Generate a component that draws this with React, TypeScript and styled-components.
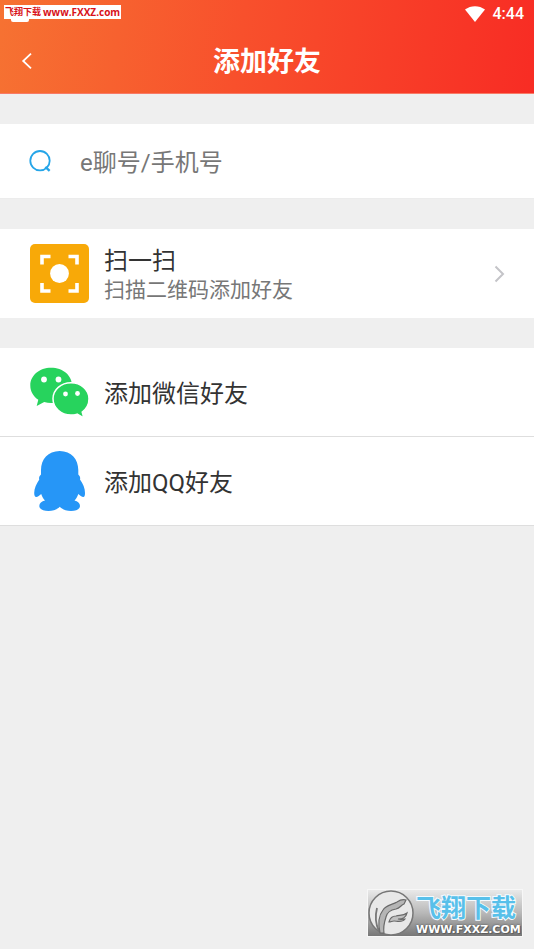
import React from 'react';
import styled, { createGlobalStyle } from 'styled-components';

const GlobalStyle = createGlobalStyle`
  *, *::before, *::after { box-sizing: border-box; }
  body {
    margin: 0;
    background: #efefef;
    font-family: Roboto, 'Noto Sans CJK SC', sans-serif;
    color: #333;
  }
  button, input { font: inherit; color: inherit; }
  svg { flex: none; }
`;

const Page = styled.div`
  position: relative;
  min-height: 100vh;
  display: flex;
  flex-direction: column;
  background: #efefef;
`;

const Header = styled.header`
  background: linear-gradient(98deg, #f67232 0%, #f8502c 45%, #f82c24 100%);
  color: #fff;
  border-bottom: 1px solid #f87a66;
`;

const StatusBar = styled.div`
  height: 28px;
  padding: 0 10px;
  display: flex;
  align-items: center;
  justify-content: flex-end;
  gap: 8px;
  font-size: 16px;
  font-weight: 500;
  line-height: 28px;
`;

const TitleBar = styled.div`
  height: 65px;
  display: grid;
  grid-template-columns: 54px 1fr 54px;
  align-items: center;
`;

const BackButton = styled.button`
  height: 56px;
  padding: 0;
  border: 0;
  background: none;
  display: flex;
  align-items: center;
  justify-content: center;
  cursor: pointer;
`;

const Title = styled.h1`
  margin: 0;
  padding-top: 2px;
  font-size: 27px;
  font-weight: 700;
  line-height: 40px;
  text-align: center;
`;

const Content = styled.main`
  display: flex;
  flex-direction: column;
  gap: 30px;
  padding: 30px 0;
`;

const SearchBox = styled.label`
  height: 75px;
  padding: 0 29px;
  display: flex;
  align-items: center;
  gap: 29px;
  background: #fff;
  border-bottom: 1px solid #ececec;
`;

const SearchInput = styled.input`
  flex: 1;
  min-width: 0;
  height: 48px;
  padding: 3px 0 0;
  border: 0;
  outline: 0;
  background: none;
  font-size: 24px;
  &::placeholder { color: #777; opacity: 1; }
`;

const Group = styled.section`
  background: #fff;
`;

const Row = styled.button<{ $divided?: boolean }>`
  width: 100%;
  height: 89px;
  padding: 0 29px 0 30px;
  display: flex;
  align-items: center;
  gap: 15px;
  border: 0;
  border-bottom: ${(p) => (p.$divided ? '1px solid #dedede' : '0')};
  background: none;
  text-align: left;
  cursor: pointer;
`;

const RowText = styled.span`
  flex: 1;
  display: flex;
  flex-direction: column;
`;

const RowTitle = styled.span`
  padding-top: 3px;
  font-size: 24px;
  line-height: 30px;
`;

const RowHint = styled.span`
  font-size: 21px;
  line-height: 28px;
  color: #777;
`;

const CornerTag = styled.div`
  position: absolute;
  top: 5px;
  left: 4px;
  height: 14px;
  padding: 0 1px;
  display: flex;
  align-items: center;
  gap: 2px;
  background: #fff;
  color: #d8121a;
  font: 700 9px/14px 'Noto Sans CJK SC', sans-serif;
  white-space: nowrap;
  &::after {
    content: '';
    position: absolute;
    top: 14px;
    left: 7px;
    width: 18px;
    height: 3px;
    border-radius: 0 0 2px 2px;
    background: #fff;
  }
`;

const TagSite = styled.span`
  font: 700 10px/14px 'Open Sans', sans-serif;
`;

const Stamp = styled.div`
  position: absolute;
  right: 11px;
  bottom: 12px;
  width: 156px;
  height: 48px;
  display: flex;
  align-items: center;
  gap: 2px;
  border: 1px solid #f7f7f7;
  background: linear-gradient(#e9e9e9, #b8b8b8 50%, #777);
`;

const StampText = styled.div`
  display: flex;
  flex-direction: column;
  padding-top: 4px;
  white-space: nowrap;
`;

const StampName = styled.span`
  color: #58c0ea;
  font: 700 25px/29px 'Liberation Sans', 'Noto Sans CJK SC', sans-serif;
  -webkit-text-stroke: 2px #f4fbff;
  paint-order: stroke fill;
`;

const StampSite = styled.span`
  color: #fff;
  font: 700 11px/14px 'DejaVu Sans', sans-serif;
  text-shadow: 0 0 2px #444, 1px 1px 0 #666;
`;

const WifiIcon = () => (
  <svg width="20" height="16" viewBox="0 0 20 16" aria-hidden="true">
    <path d="M0 3.6C5.8-.9 14.2-.9 20 3.6L10 16Z" fill="#fff" />
  </svg>
);

const BackIcon = () => (
  <svg width="12" height="18" viewBox="0 0 12 18" aria-hidden="true">
    <path d="M10 1.7 2.2 9l7.8 7.3" fill="none" stroke="#fff" strokeWidth="1.8" />
  </svg>
);

const SearchIcon = () => (
  <svg width="22" height="22" viewBox="0 0 22 22" aria-hidden="true">
    <g fill="none" stroke="#25a5e8" strokeWidth="1.8">
      <circle cx="11" cy="10.7" r="9.7" />
      <path d="m16.4 16.8 4.2 4" strokeWidth="2.4" />
    </g>
  </svg>
);

const ScanIcon = () => (
  <svg width="59" height="59" viewBox="0 0 59 59" aria-hidden="true">
    <rect width="59" height="59" rx="5" fill="#f8a908" />
    <path
      d="M12 20.5v-8h8.500M38.500 12.500H47v8M12 39v8h8.500M38.500 47H47v-8"
      fill="none"
      stroke="#fff"
      strokeWidth="3.6"
    />
    <circle cx="29.5" cy="29.5" r="9.4" fill="#fff" />
  </svg>
);

const WeChatIcon = () => (
  <svg width="59" height="59" viewBox="0 0 59 59" aria-hidden="true">
    <path
      d="M21 4.800C9.500 4.800.3 12.500.3 22.500c0 5.900 3 10.900 8 14.200L6.700 43l7.500-4c2.200.7 4.500 1 7 1C33 40 42 32.500 42 22.500S33 4.800 21 4.800Z"
      fill="#27d35d"
    />
    <path
      d="M41 19.800c-10 0-18 7-18 16s8 16.200 18 16.200c2.200 0 4.200-.3 6.100-.9l6.700 3.700-1.600-5.800c4.200-3 6.800-7.800 6.800-13.200 0-9-8-16-18-16Z"
      fill="#27d35d"
      stroke="#fff"
      strokeWidth="1.5"
    />
    <g fill="#fff">
      <circle cx="14" cy="16.5" r="2.9" />
      <circle cx="28.5" cy="16.5" r="2.9" />
      <circle cx="35.5" cy="31" r="2.4" />
      <circle cx="47.5" cy="30.5" r="2.4" />
    </g>
  </svg>
);

const PenguinIcon = () => (
  <svg width="59" height="60" viewBox="0 0 59 60" aria-hidden="true">
    <path
      d="M29.700 0C18 0 11 8.500 11 19v4.500c-1.700 1.600-2.300 3.300-1.700 5C6.500 32.500 4.200 37.500 4.200 42c0 2.500.8 4 2 4 1.500 0 3.500-1.800 5-3 1 3 2.200 4.700 3.800 6.600-3.300.9-5.700 2.800-5.700 5.300 0 3 3.700 5.100 9.200 5.100 4.500 0 9-1.600 11.300-4.200C32 58.400 36.500 60 41 60c5.500 0 9-2.100 9-5.100 0-2.500-2.300-4.400-5.500-5.300 1.600-1.900 2.800-3.600 3.800-6.600 1.500 1.200 3.500 3 5 3 1.200 0 1.700-1.500 1.700-4 0-4.500-2-9.500-5-13.500.5-1.700 0-3.400-1.700-5V19C48.300 8.500 41.500 0 29.700 0Z"
      fill="#2696f7"
    />
  </svg>
);

const ChevronIcon = () => (
  <svg width="11" height="18" viewBox="0 0 11 18" aria-hidden="true">
    <path d="m1.500 1.500 7.500 7.500-7.500 7.500" fill="none" stroke="#c4c4c8" strokeWidth="2" />
  </svg>
);

const StampLogo = () => (
  <svg width="46" height="46" viewBox="0 0 46 46" aria-hidden="true">
    <circle cx="23" cy="23" r="22" fill="#e8e8e8" stroke="#777" strokeWidth="1.5" />
    <path
      d="M12 43C10 34 11 25 15 20c3-5 9-5 14-8 3-2 5-3 9-2l-2 4c-3 1-4 4-8 5-6 1-9 3-10 8-2 6-3 10-2 16Z"
      fill="#b5b5b5"
      stroke="#696969"
      strokeWidth="1.2"
    />
    <path
      d="M21 32c1-4 3-6 7-6 4-1 7 0 11-3-1 5-5 6-9 6 3 1 5 0 7 0-3 4-8 2-11 2-2 0-3 1-5 1Z"
      fill="#c0c0c0"
      stroke="#696969"
      strokeWidth="1.2"
    />
    <path d="M9 18c-2 8-2 15 2 23" fill="none" stroke="#777" strokeWidth="1.8" />
  </svg>
);

export default function App() {
  return (
    <Page>
      <GlobalStyle />
      <Header>
        <StatusBar>
          <WifiIcon />
          <span>4:44</span>
        </StatusBar>
        <TitleBar>
          <BackButton type="button" aria-label="返回">
            <BackIcon />
          </BackButton>
          <Title>添加好友</Title>
        </TitleBar>
      </Header>
      <Content>
        <SearchBox>
          <SearchIcon />
          <SearchInput type="text" placeholder="e聊号/手机号" aria-label="e聊号/手机号" />
        </SearchBox>
        <Group>
          <Row type="button">
            <ScanIcon />
            <RowText>
              <RowTitle>扫一扫</RowTitle>
              <RowHint>扫描二维码添加好友</RowHint>
            </RowText>
            <ChevronIcon />
          </Row>
        </Group>
        <Group>
          <Row type="button" $divided>
            <WeChatIcon />
            <RowTitle>添加微信好友</RowTitle>
          </Row>
          <Row type="button" $divided>
            <PenguinIcon />
            <RowTitle>添加QQ好友</RowTitle>
          </Row>
        </Group>
      </Content>
      <CornerTag>
        <span>飞翔下载</span>
        <TagSite>www.FXXZ.com</TagSite>
      </CornerTag>
      <Stamp>
        <StampLogo />
        <StampText>
          <StampName>飞翔下载</StampName>
          <StampSite>WWW.FXXZ.COM</StampSite>
        </StampText>
      </Stamp>
    </Page>
  );
}
